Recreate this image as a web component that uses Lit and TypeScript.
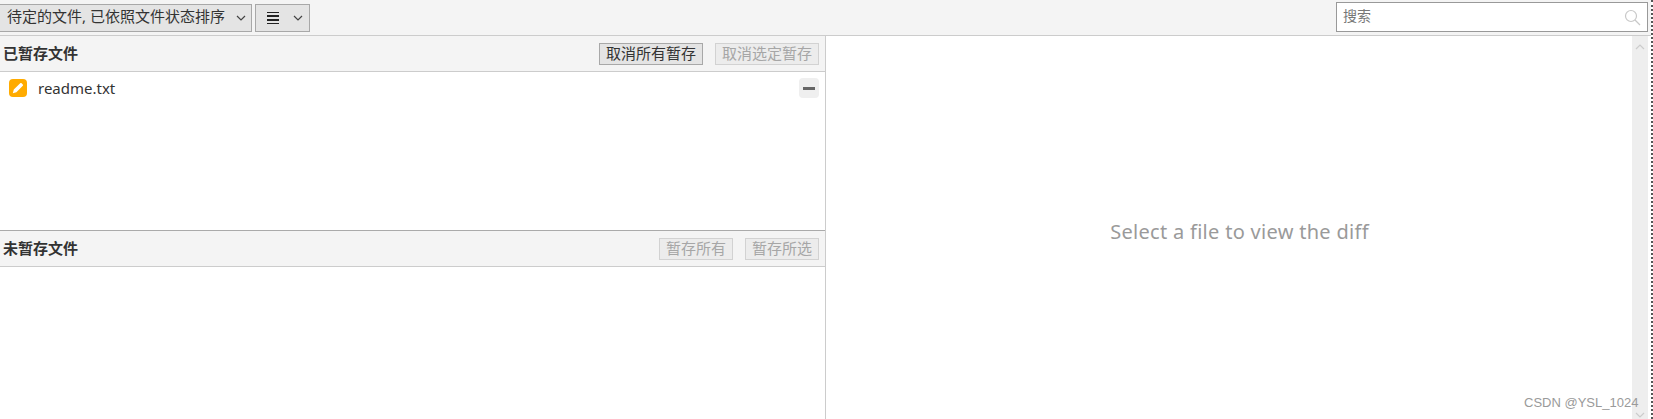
import { LitElement, html, css } from "lit";
import { customElement } from "lit/decorators.js";

const chev = () => html`<svg class="chev" width="10" height="6" viewBox="0 0 10 6"><path d="M1 1l4 4 4-4" fill="none" stroke="currentColor" stroke-width="1.2"/></svg>`;

@customElement("app-root")
export class AppRoot extends LitElement {
  static styles = css`
    :host { display: block; width: 1653px; height: 419px; overflow: hidden; background: #fff; color: #333;
      font-family: "Noto Sans", "Noto Sans CJK SC", sans-serif; font-size: 13px; position: relative; }
    * { box-sizing: border-box; }
    .page { display: flex; height: 419px; }
    .main { width: 1651px; display: flex; flex-direction: column; }
    .edge { width: 2px; border-left: 2px dotted #555; }
    .toolbar { height: 36px; flex: none; background: #f4f4f4; border-bottom: 1px solid #ccc; display: flex; align-items: flex-start; padding: 4px 3px 0 0; gap: 3px; }
    .combo { height: 28px; border: 1px solid #a8a8a8; background: #e4e4e4; display: flex; align-items: center; font-size: 15px; color: #333; }
    .combo span { margin-bottom: 5px; }
    .combo.first { width: 253px; margin-left: -1px; padding-left: 7px; justify-content: space-between; padding-right: 5px; }
    .combo.second { width: 55px; padding: 0 6px 0 11px; justify-content: space-between; }
    .bars { width: 12px; height: 13px; display: flex; flex-direction: column; justify-content: space-between; }
    .bars i { display: block; width: 100%; height: 1.5px; background: #222; }
    .chev { color: #444; flex: none; }
    .search { margin-left: auto; margin-top: -2px; width: 312px; height: 30px; border: 1px solid #999; background: #fff; display: flex; align-items: center; justify-content: space-between; padding: 0 6px 4px; color: #777; font-size: 14px; }
    .search svg { margin-top: 4px; }
    .body { flex: 1; display: flex; min-height: 0; }
    .left { width: 826px; flex: none; border-right: 1px solid #ccc; display: flex; flex-direction: column; }
    .head { height: 36px; flex: none; background: #f4f4f4; border-bottom: 1px solid #ccc; display: flex; align-items: center; padding: 0 6px 0 3px; gap: 12px; }
    .head.lower { border-top: 1px solid #aaa; height: 37px; }
    .head b { margin-right: auto; font-size: 15px; font-weight: 700; color: #333; margin-top: -2px; line-height: 20px; }
    .btn { height: 22px; border: 1px solid #a8a8a8; background: #e4e4e4; font-size: 15px; line-height: 18px; padding: 0; text-align: center; color: #333; white-space: nowrap; }
    .btn.w6 { width: 104px; }
    .btn.w4 { width: 74px; }
    .btn.off { color: #a6a6a6; background: #ececec; border-color: #d2d2d2; }
    .staged { height: 158px; flex: none; padding: 5px 6px 0 9px; }
    .file { display: flex; align-items: center; height: 22px; font-size: 15px; color: #333; }
    .file svg { flex: none; margin-right: 11px; }
    .file span { flex: 1; }
    .minus { width: 20px; height: 20px; border-radius: 4px; background: #efefef; display: flex; align-items: center; justify-content: center; }
    .minus i { display: block; width: 12px; height: 3px; background: #666; }
    .diff { flex: 1; display: flex; min-width: 0; }
    .empty { flex: 1; display: flex; align-items: center; justify-content: center; font-size: 20px; color: #9a9a9a; padding: 7px 0 0 21px; letter-spacing: 0.3px; }
    .scroll { width: 16px; margin-right: 3px; background: #eee; display: flex; flex-direction: column; align-items: center; justify-content: space-between; padding: 8px 0 1px; color: #ccc; }
    .scroll .chev { color: #ccc; }
    .mark { position: absolute; left: 1524px; top: 395px; font: 13px "Liberation Sans", sans-serif; color: #9a9a9a; white-space: nowrap; }
  `;

  render() {
    return html`
      <div class="page">
        <div class="main">
          <div class="toolbar">
            <div class="combo first"><span>待定的文件, 已依照文件状态排序</span>${chev()}</div>
            <div class="combo second"><div class="bars"><i></i><i></i><i></i><i></i></div>${chev()}</div>
            <div class="search"><span>搜索</span>
              <svg width="17" height="17" viewBox="0 0 17 17"><circle cx="7" cy="7" r="5.5" fill="none" stroke="#c8c8c8" stroke-width="1.2"/><path d="M11 11l5 5" stroke="#c8c8c8" stroke-width="1.2"/></svg>
            </div>
          </div>
          <div class="body">
            <div class="left">
              <div class="head"><b>已暂存文件</b><div class="btn w6">取消所有暂存</div><div class="btn w6 off">取消选定暂存</div></div>
              <div class="staged">
                <div class="file">
                  <svg width="18" height="18" viewBox="0 0 18 18"><rect width="18" height="18" rx="4" fill="#ffab00"/><path d="M3.8 14.2l1-3.6 6.4-6.4c.4-.4 1-.4 1.4 0l1.2 1.2c.4.4.4 1 0 1.4l-6.4 6.4z" fill="#fff"/></svg>
                  <span>readme.txt</span>
                  <div class="minus"><i></i></div>
                </div>
              </div>
              <div class="head lower"><b>未暂存文件</b><div class="btn w4 off">暂存所有</div><div class="btn w4 off">暂存所选</div></div>
            </div>
            <div class="diff">
              <div class="empty">Select a file to view the diff</div>
              <div class="scroll">
                <svg width="10" height="6" viewBox="0 0 10 6"><path d="M1 5l4-4 4 4" fill="none" stroke="currentColor" stroke-width="1.2"/></svg>
                ${chev()}
              </div>
            </div>
          </div>
        </div>
        <div class="edge"></div>
      </div>
      <div class="mark">CSDN @YSL_1024</div>
    `;
  }
}
